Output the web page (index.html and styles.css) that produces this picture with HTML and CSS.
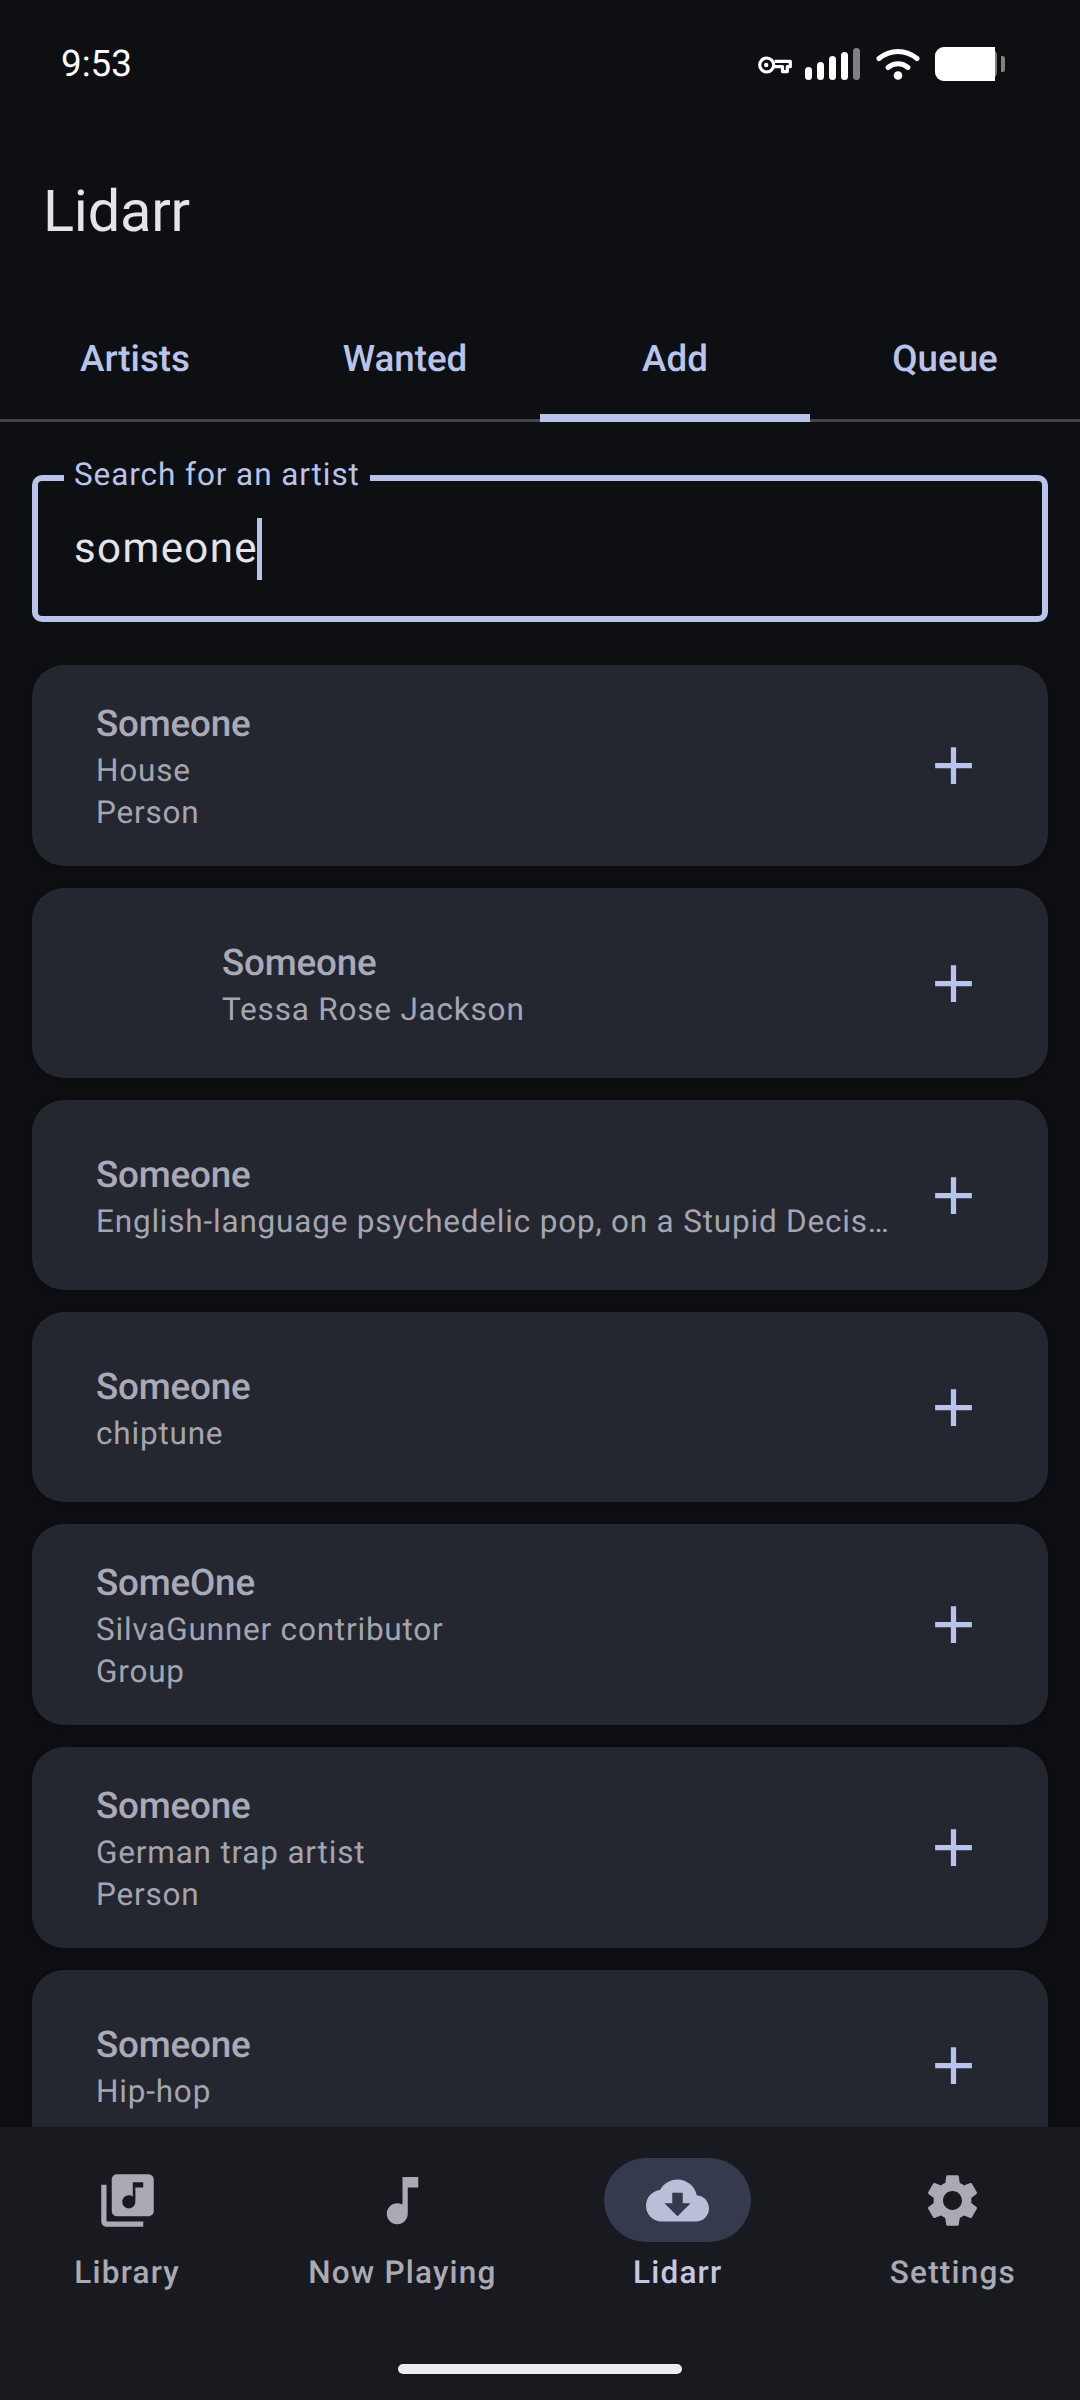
FILE: index.html
```html
<!DOCTYPE html>
<html lang="en">
<head>
<meta charset="utf-8">
<title>Lidarr</title>
<link rel="stylesheet" href="styles.css">
</head>
<body>
<div class="app">
  <header class="status">
    <span class="time">9:53</span>
    <div class="status-icons">
      <svg class="ic-key" viewBox="0 0 34 18"><path d="M16.500 5.300h15.800v5.400h-3v4.900h-4.800v-4.900h-8" fill="none" stroke="#fff" stroke-width="3.200" stroke-linejoin="round"/><circle cx="8.700" cy="9" r="7" fill="none" stroke="#fff" stroke-width="3.200"/><circle cx="8.200" cy="9" r="2.200" fill="#fff"/></svg>
      <svg class="ic-signal" viewBox="0 0 55 32"><rect x="0" y="19" width="7" height="13" rx="3.5" fill="#fff"/><rect x="12" y="14" width="7" height="18" rx="3.5" fill="#fff"/><rect x="24" y="8" width="7" height="24" rx="3.5" fill="#fff"/><rect x="36" y="4" width="7" height="28" rx="3.5" fill="#fff"/><rect x="48" y="0" width="7" height="32" rx="3.5" fill="#808080"/></svg>
      <svg class="ic-wifi" viewBox="0 0 44 32"><path d="M3 10.500C14 1 30 1 41 10.500" fill="none" stroke="#fff" stroke-width="5" stroke-linecap="round"/><path d="M12 19.500C18 14.500 26 14.500 32 19.500" fill="none" stroke="#fff" stroke-width="5" stroke-linecap="round"/><circle cx="22" cy="27.500" r="4.300" fill="#fff"/></svg>
      <svg class="ic-batt" viewBox="0 0 70 34"><rect x="0" y="0" width="62" height="34" rx="9" fill="#808080"/><path d="M9 0h51v34H9a9 9 0 0 1-9-9V9a9 9 0 0 1 9-9z" fill="#fff"/><path d="M66 9h1.500a2.500 2.500 0 0 1 2.500 2.500v11a2.500 2.500 0 0 1-2.500 2.500H66z" fill="#808080"/></svg>
    </div>
  </header>

  <div class="app-title">Lidarr</div>

  <nav class="tabs">
    <div class="tab">Artists</div>
    <div class="tab">Wanted</div>
    <div class="tab tab-active">Add</div>
    <div class="tab">Queue</div>
  </nav>

  <section class="search">
    <div class="field">
      <span class="field-label">Search for an artist</span>
      <span class="field-value">someone</span><span class="caret"></span>
    </div>
  </section>

  <main class="results">
    <article class="card">
      <div class="card-text">
        <div class="card-title">Someone</div>
        <div class="card-sub">House</div>
        <div class="card-sub">Person</div>
      </div>
      <svg class="add" viewBox="0 0 24 24"><path d="M19 13h-6v6h-2v-6H5v-2h6V5h2v6h6v2z"/></svg>
    </article>
    <article class="card">
      <div class="card-thumb"></div>
      <div class="card-text">
        <div class="card-title">Someone</div>
        <div class="card-sub">Tessa Rose Jackson</div>
      </div>
      <svg class="add" viewBox="0 0 24 24"><path d="M19 13h-6v6h-2v-6H5v-2h6V5h2v6h6v2z"/></svg>
    </article>
    <article class="card">
      <div class="card-text">
        <div class="card-title">Someone</div>
        <div class="card-sub">English-language psychedelic pop, on a Stupid Decis…</div>
      </div>
      <svg class="add" viewBox="0 0 24 24"><path d="M19 13h-6v6h-2v-6H5v-2h6V5h2v6h6v2z"/></svg>
    </article>
    <article class="card">
      <div class="card-text">
        <div class="card-title">Someone</div>
        <div class="card-sub">chiptune</div>
      </div>
      <svg class="add" viewBox="0 0 24 24"><path d="M19 13h-6v6h-2v-6H5v-2h6V5h2v6h6v2z"/></svg>
    </article>
    <article class="card">
      <div class="card-text">
        <div class="card-title">SomeOne</div>
        <div class="card-sub">SilvaGunner contributor</div>
        <div class="card-sub">Group</div>
      </div>
      <svg class="add" viewBox="0 0 24 24"><path d="M19 13h-6v6h-2v-6H5v-2h6V5h2v6h6v2z"/></svg>
    </article>
    <article class="card">
      <div class="card-text">
        <div class="card-title">Someone</div>
        <div class="card-sub">German trap artist</div>
        <div class="card-sub">Person</div>
      </div>
      <svg class="add" viewBox="0 0 24 24"><path d="M19 13h-6v6h-2v-6H5v-2h6V5h2v6h6v2z"/></svg>
    </article>
    <article class="card">
      <div class="card-text">
        <div class="card-title">Someone</div>
        <div class="card-sub">Hip-hop</div>
      </div>
      <svg class="add" viewBox="0 0 24 24"><path d="M19 13h-6v6h-2v-6H5v-2h6V5h2v6h6v2z"/></svg>
    </article>
  </main>

  <footer class="bottom">
    <div class="nav">
      <div class="nav-item">
        <div class="nav-pill"><svg class="nav-icon" viewBox="0 0 24 24"><path d="M20 2H8c-1.100 0-2 .9-2 2v12c0 1.100.9 2 2 2h12c1.100 0 2-.9 2-2V4c0-1.100-.9-2-2-2zm-2 5h-3v5.500c0 1.380-1.120 2.500-2.500 2.500S10 13.880 10 12.500s1.120-2.500 2.500-2.500c.57 0 1.080.19 1.500.51V5h4v2zM4 6H2v14c0 1.100.9 2 2 2h14v-2H4V6z"/></svg></div>
        <span class="nav-label">Library</span>
      </div>
      <div class="nav-item">
        <div class="nav-pill"><svg class="nav-icon" viewBox="0 0 24 24"><path d="M12 3v10.550c-.59-.34-1.270-.55-2-.55-2.210 0-4 1.790-4 4s1.790 4 4 4 4-1.790 4-4V7h4V3h-6z"/></svg></div>
        <span class="nav-label">Now Playing</span>
      </div>
      <div class="nav-item nav-active">
        <div class="nav-pill"><svg class="nav-icon" viewBox="0 0 24 24"><path d="M19.350 10.040C18.670 6.590 15.640 4 12 4 9.110 4 6.600 5.640 5.350 8.040 2.340 8.360 0 10.910 0 14c0 3.310 2.690 6 6 6h13c2.760 0 5-2.240 5-5 0-2.640-2.050-4.780-4.650-4.960zM17 13l-5 5-5-5h3V9h4v4h3z"/></svg></div>
        <span class="nav-label">Lidarr</span>
      </div>
      <div class="nav-item">
        <div class="nav-pill"><svg class="nav-icon" viewBox="0 0 24 24"><path d="M19.140 12.940c.04-.3.06-.61.06-.94 0-.32-.02-.64-.07-.94l2.030-1.580c.18-.14.23-.41.12-.61l-1.920-3.320c-.12-.22-.37-.29-.59-.22l-2.390.96c-.5-.38-1.030-.7-1.620-.94l-.36-2.540c-.04-.24-.24-.41-.48-.41h-3.840c-.24 0-.43.17-.47.41l-.36 2.540c-.59.24-1.130.57-1.620.94l-2.390-.96c-.22-.08-.47 0-.59.22L2.740 8.870c-.12.21-.08.47.12.61l2.030 1.580c-.05.3-.09.63-.09.94s.02.64.07.94l-2.030 1.580c-.18.14-.23.41-.12.61l1.920 3.320c.12.22.37.29.59.22l2.390-.96c.5.38 1.030.7 1.620.94l.36 2.540c.05.24.24.41.48.41h3.840c.24 0 .44-.17.47-.41l.36-2.540c.59-.24 1.130-.56 1.620-.94l2.390.96c.22.08.47 0 .59-.22l1.920-3.320c.12-.22.07-.47-.12-.61l-2.010-1.580zM12 15.600c-1.980 0-3.600-1.620-3.600-3.600s1.620-3.600 3.600-3.600 3.600 1.620 3.600 3.600-1.620 3.600-3.600 3.600z"/></svg></div>
        <span class="nav-label">Settings</span>
      </div>
    </div>
    <div class="home-wrap"><div class="home-bar"></div></div>
  </footer>
</div>
</body>
</html>
```

FILE: styles.css
```css
* { box-sizing: border-box; }
html, body { margin: 0; padding: 0; background: #0d0f13; }
body { font-family: Roboto, "Noto Sans", sans-serif; color: #e3e4ec; text-rendering: geometricPrecision; }
.app { width: 1080px; height: 2400px; display: flex; flex-direction: column; overflow: hidden; background: #0d0f13; }

.status { height: 124px; flex: none; display: flex; justify-content: space-between; align-items: flex-start; padding: 40px 75px 0 61px; }
.time { font-size: 36.75px; line-height: 48px; color: #fff; }
.status-icons { display: flex; align-items: flex-start; padding-top: 7px; }
.status-icons svg { display: block; flex: none; }
.ic-key { width: 34px; height: 18px; margin-top: 9px; margin-right: 13px; }
.ic-signal { width: 55px; height: 32px; margin-top: 1px; margin-right: 16px; }
.ic-wifi { width: 44px; height: 32px; margin-top: 1px; margin-right: 15px; }
.ic-batt { width: 70px; height: 34px; }

.app-title { height: 170px; flex: none; display: flex; align-items: center; padding: 5px 0 0 43px; font-size: 57.75px; letter-spacing: -.25px; color: #e3e4ec; }

.tabs { height: 128px; flex: none; display: grid; grid-template-columns: repeat(4, 270px); border-bottom: 3px solid #44464e; }
.tab { position: relative; display: flex; align-items: center; justify-content: center; font-size: 36.75px; font-weight: 500; color: #b8c4ec; padding-top: 3px; }
.tab-active::after { content: ""; position: absolute; left: 0; right: 0; bottom: -3px; height: 8px; background: #b8c4ec; }

.search { flex: none; padding: 53px 32px 43px; }
.field { position: relative; height: 147px; border: 6px solid #b8c4ec; border-radius: 10px; display: flex; align-items: center; padding-left: 36px; }
.field-label { position: absolute; left: 26px; top: -27px; padding: 0 10px; background: #0d0f13; font-size: 31.5px; line-height: 42px; letter-spacing: .92px; color: #b8c4ec; }
.field-value { font-size: 42px; letter-spacing: 1.4px; color: #e3e4ec; line-height: 62px; padding-top: 1px; }
.caret { width: 5px; height: 62px; margin-left: -1px; background: #b8c4ec; }

.results { flex: 1; min-height: 0; overflow: hidden; padding: 0 32px; display: flex; flex-direction: column; gap: 22px; }
.card { flex: none; min-height: 190px; padding: 32px 63px 32px 64px; border-radius: 32px; background: #24272f; box-shadow: 0 1px 8px rgba(0, 0, 0, .25); display: flex; align-items: center; }
.card-thumb { width: 126px; flex: none; }
.card-text { flex: 1; min-width: 0; }
.card-title { font-size: 36.75px; line-height: 53px; font-weight: 500; letter-spacing: -.2px; color: #a9aab8; white-space: nowrap; }
.card-sub { font-size: 31.5px; line-height: 42px; letter-spacing: .8px; color: #a3a5b1; white-space: nowrap; }
.add { width: 63px; height: 63px; flex: none; fill: #b8c4ec; }

.bottom { height: 273px; flex: none; background: #191a1f; display: flex; flex-direction: column; }
.nav { display: grid; grid-template-columns: repeat(4, 1fr); column-gap: 55px; padding: 31px 17px 0; }
.nav-item { display: flex; flex-direction: column; align-items: center; color: #a9aab4; }
.nav-pill { width: 147px; height: 84px; border-radius: 42px; display: flex; align-items: center; justify-content: center; }
.nav-icon { width: 63px; height: 63px; fill: currentColor; display: block; }
.nav-label { margin-top: 10px; font-size: 31.5px; line-height: 42px; font-weight: 500; letter-spacing: 1.2px; white-space: nowrap; }
.nav-active { color: #c4c9e1; }
.nav-active .nav-pill { background: #353a4e; }
.nav-active .nav-icon { fill: #b9bfd9; }
.home-wrap { flex: 1; display: flex; justify-content: center; padding-top: 70px; }
.home-bar { width: 284px; height: 10px; border-radius: 5px; background: #ececec; }
```
